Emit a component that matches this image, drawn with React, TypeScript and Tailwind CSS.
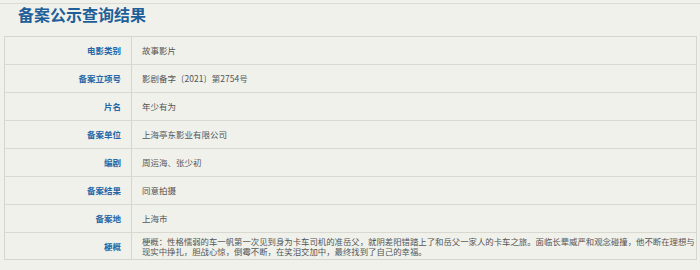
import React from "react";

const rows: [string, string][] = [
  ["电影类别", "故事影片"],
  ["备案立项号", "影剧备字〔2021〕第2754号"],
  ["片名", "年少有为"],
  ["备案单位", "上海亭东影业有限公司"],
  ["编剧", "周运海、张少初"],
  ["备案结果", "同意拍摄"],
  ["备案地", "上海市"],
];

const synopsis =
  "梗概：性格懦弱的车一帆第一次见到身为卡车司机的准岳父，就阴差阳错踏上了和岳父一家人的卡车之旅。面临长辈威严和观念碰撞，他不断在理想与现实中挣扎，胆战心惊，倒霉不断，在笑泪交加中，最终找到了自己的幸福。";

export default function App() {
  return (
    <div
      className="w-[700px] h-[270px] bg-[#f0f1eb] overflow-hidden pt-[3px]"
      style={{ fontFamily: '"Noto Sans CJK SC", "Noto Sans", sans-serif' }}
    >
      <div className="border-t border-[#dcdcd4]">
        <div className="h-[20px] pl-[18px] flex items-center text-[16px] font-bold text-[#1f5f99] leading-none">
          备案公示查询结果
        </div>
        <div className="mt-[12px] ml-[4px] w-[693px] border border-[#d6d6cf]">
          {rows.map(([k, v], i) => (
            <div key={i} className="flex h-[28px] border-b border-[#d9d9d2]">
              <div className="w-[127px] shrink-0 border-r border-[#d6d6cf] flex items-center justify-end pr-[10px] text-[8.5px] font-bold text-[#2566a6]">
                {k}
              </div>
              <div className="flex items-center pl-[10px] text-[8.5px] text-[#555]">
                {v}
              </div>
            </div>
          ))}
          <div className="flex h-[26px]">
            <div className="w-[127px] shrink-0 border-r border-[#d6d6cf] flex items-center justify-end pr-[10px] text-[8.5px] font-bold text-[#2566a6]">
              梗概
            </div>
            <div className="flex items-center pl-[10px] text-[8.4px] leading-[10px] text-[#555]">
              {synopsis}
            </div>
          </div>
        </div>
      </div>
    </div>
  );
}
